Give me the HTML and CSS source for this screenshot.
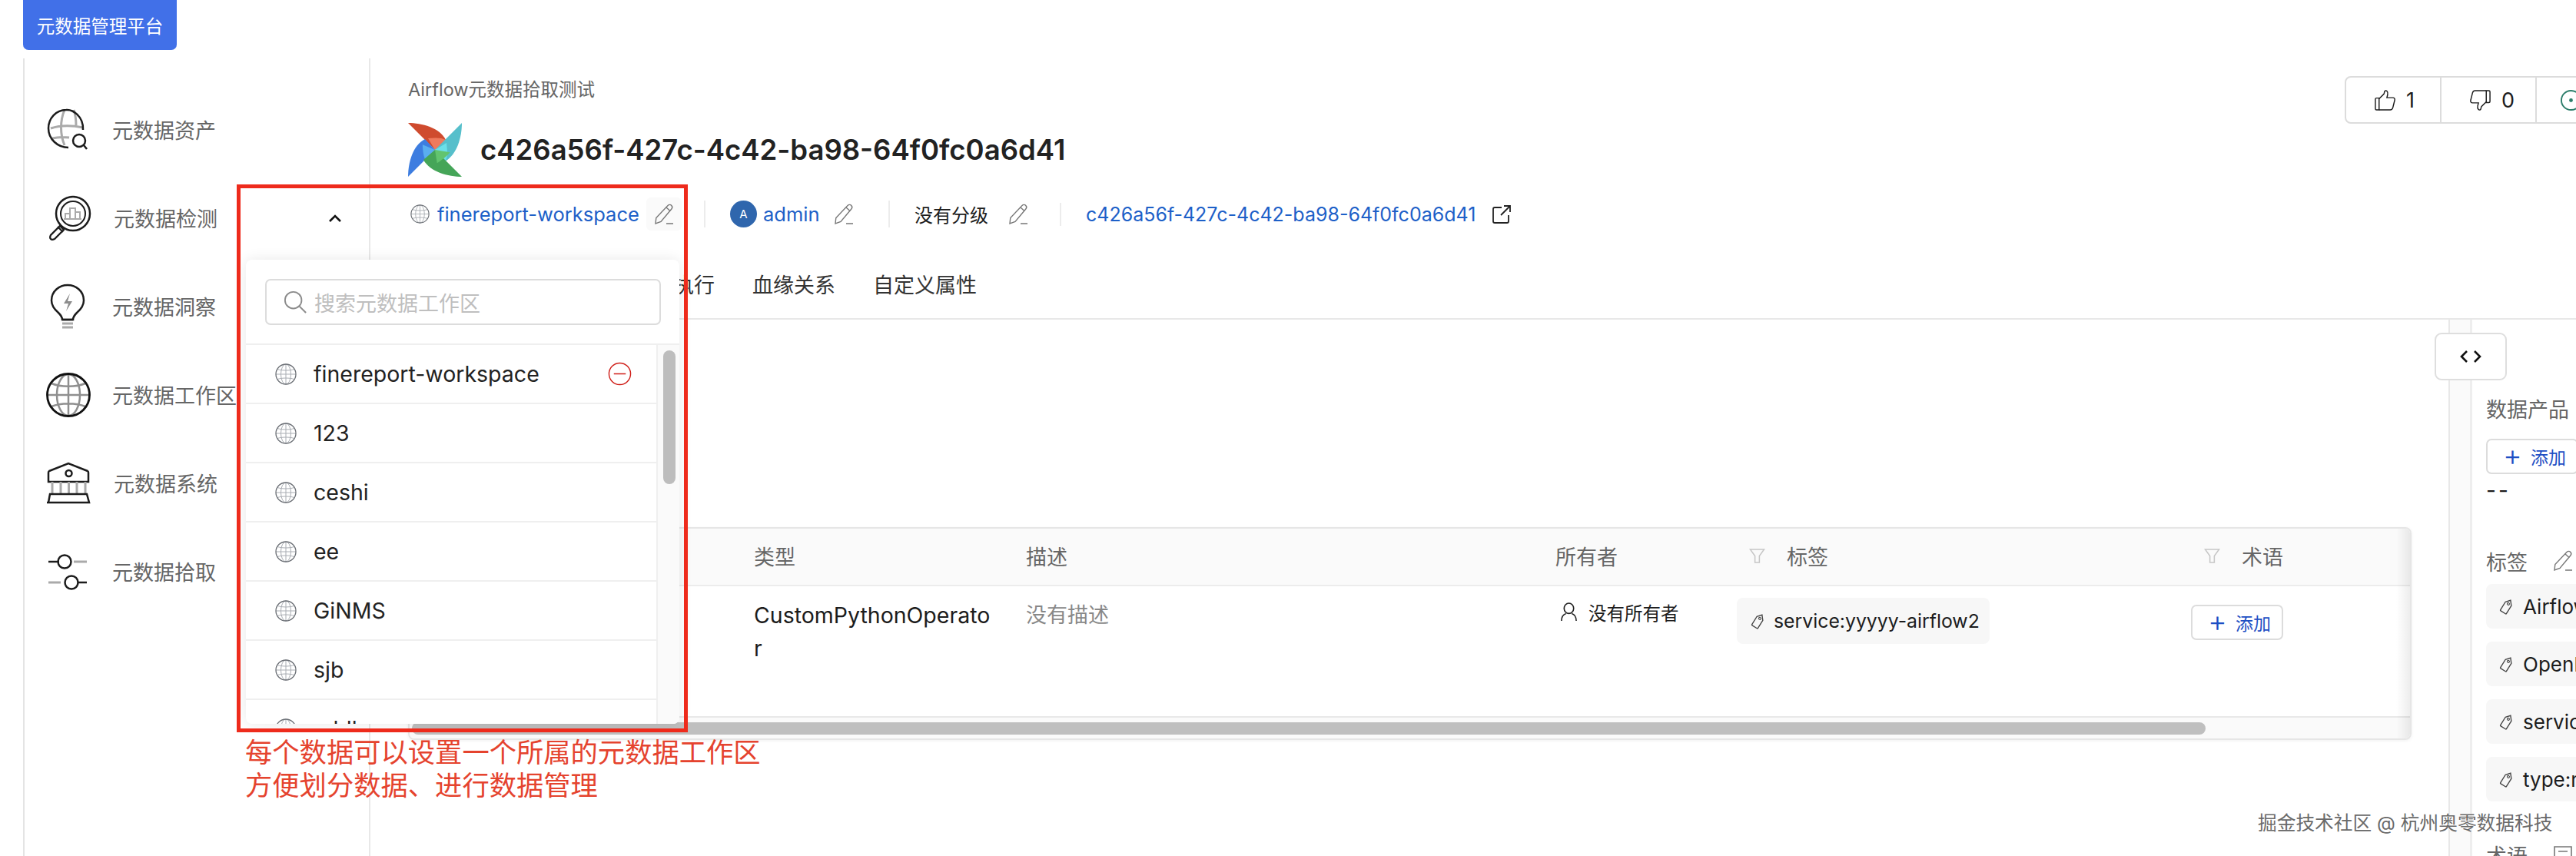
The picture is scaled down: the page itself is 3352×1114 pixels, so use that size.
FILE: index.html
```html
<!DOCTYPE html>
<html>
<head>
    <meta charset="utf-8">
    <title>元数据管理平台</title>
    <link rel="stylesheet" href="styles.css">
</head>
<body>
    <svg class="sprite" xmlns="http://www.w3.org/2000/svg">
        <symbol id="globe" viewBox="0 0 28 28">
            <g fill="none" stroke="#a9adb3" stroke-width="1">
                <ellipse cx="14" cy="14" rx="6.5" ry="13"/>
                <path d="M14 1v26M1 14h26M3 7.5c6 2 16 2 22 0M3 20.5c6-2 16-2 22 0"/>
            </g>
            <circle cx="14" cy="14" r="13" fill="none" stroke="#6b6f75" stroke-width="1.3"/>
        </symbol>
        <symbol id="pencil" viewBox="0 0 26 28">
            <path d="M18 2.5c1.500-1.500 3.500-1.500 4.800 0 1.300 1.400 1.200 3.200 0 4.500L9 23.500l-7 2.500 .8-7.500z" fill="none" stroke="currentColor" stroke-width="1.4"/>
            <path d="M16 5l5 4.500M16 26h9" fill="none" stroke="currentColor" stroke-width="1.4"/>
        </symbol>
        <symbol id="tag" viewBox="0 0 24 24">
            <g transform="rotate(32 12 12)">
                <path d="M7 8l5-6 5 6v13c0 .7-.4 1-1 1H8c-.6 0-1-.3-1-1z" fill="none" stroke="currentColor" stroke-width="1.5"/>
                <circle cx="12" cy="8" r="1.6" fill="none" stroke="currentColor" stroke-width="1.2"/>
            </g>
        </symbol>
        <symbol id="funnel" viewBox="0 0 22 22">
            <path d="M1.500 2h19l-6.500 9v9H8v-9z" fill="none" stroke="#c6c6c6" stroke-width="1.6"/>
        </symbol>
        <symbol id="thumb" viewBox="0 0 30 30">
            <path d="M2 13.500c0-1 .6-1.500 1.500-1.500H7v16H3.500C2.600 28 2 27.500 2 26.500z" fill="none" stroke="currentColor" stroke-width="1.5"/>
            <path d="M7 13l6.500-6.500c.5-1 .5-2.500 1-3.500s2-1.500 3-.5 1.500 3 1 5l-1 4h8c2 0 3 1.500 2.500 3.500L25.500 25c-.5 2-1.500 3-3.500 3H7" fill="none" stroke="currentColor" stroke-width="1.5"/>
        </symbol>
    </svg>

    <div class="top-bar">
        <span class="platform-badge">元数据管理平台</span>
    </div>

    <div class="layout">
        <nav class="sidebar">
            <a class="nav-item">
                <svg class="nav-icon" viewBox="0 0 60 60">
                    <g fill="none" stroke="#aaa" stroke-width="3">
                        <path d="M6 28c12-4 28-4 42-1M8 41c8-2 14-2 22-1M24 4c-6 14-6 32 0 46M36 4c2 6 3 12 3 20"/>
                    </g>
                    <path d="M48 30C49 12 34 3 26 4 13 4 3 15 3 28c0 14 12 25 26 25" fill="none" stroke="#1c1c1c" stroke-width="2.5"/>
                    <circle cx="43" cy="44" r="8" fill="#fff" stroke="#1c1c1c" stroke-width="2.5"/>
                    <path d="M49 50l4 5" stroke="#1c1c1c" stroke-width="2.5"/>
                </svg>
                <span class="nav-label">元数据资产</span>
            </a>
            <a class="nav-item nav-item-open">
                <svg class="nav-icon" viewBox="0 0 60 60">
                    <circle cx="35" cy="24" r="22" fill="none" stroke="#1c1c1c" stroke-width="2.5"/>
                    <circle cx="35" cy="24" r="16" fill="none" stroke="#1c1c1c" stroke-width="2"/>
                    <path d="M25 31v-7h6v7M31 31V17h7v14M38 31v-9h6v9M23 31h23" fill="none" stroke="#aaa" stroke-width="2"/>
                    <path d="M18 40l5 5-12 12c-2 1-4 1-5 0s-1-3 0-5zM15 41l7 7" fill="#fff" stroke="#1c1c1c" stroke-width="2.3"/>
                </svg>
                <span class="nav-label">元数据检测</span>
                <svg class="nav-chevron" viewBox="0 0 18 12">
                    <path d="M2 10l7-7 7 7" fill="none" stroke="#111" stroke-width="2.6"/>
                </svg>
            </a>
            <a class="nav-item">
                <svg class="nav-icon" viewBox="0 0 60 60">
                    <path d="M21 47c0-4-2-6-5-9C9 32 7 27 7 22 7 10 17 2 28 2s21 8 21 20c0 5-2 10-9 16-3 3-5 5-5 9z" fill="none" stroke="#1c1c1c" stroke-width="2.5"/>
                    <path d="M31 13l-8 13h6l-3 10 8-13h-6z" fill="#8d8d8d"/>
                    <path d="M21 47h14" stroke="#1c1c1c" stroke-width="2.5"/>
                    <path d="M21 52h14M21 57h14" stroke="#aaa" stroke-width="3"/>
                </svg>
                <span class="nav-label">元数据洞察</span>
            </a>
            <a class="nav-item">
                <svg class="nav-icon" viewBox="0 0 60 60">
                    <g fill="none" stroke="#8f8f8f" stroke-width="2.5">
                        <ellipse cx="29" cy="30" rx="15" ry="27"/>
                        <path d="M29 3v54M2 30h54M7 15c12 5 32 5 44 0M7 45c12-5 32-5 44 0"/>
                    </g>
                    <circle cx="29" cy="30" r="27.5" fill="none" stroke="#111" stroke-width="2.8"/>
                </svg>
                <span class="nav-label">元数据工作区</span>
            </a>
            <a class="nav-item nav-item-shift">
                <svg class="nav-icon" viewBox="0 0 60 60">
                    <path d="M4 14L29 4l25 10c1 .5 1 1 1 2v12H3V16c0-1 0-1.500 1-2z" fill="none" stroke="#1c1c1c" stroke-width="2.5"/>
                    <circle cx="29.5" cy="17" r="4" fill="none" stroke="#1c1c1c" stroke-width="2.5"/>
                    <path d="M8 28v16M19 28v16M29.500 28v16M40 28v16M51 28v16" stroke="#aaa" stroke-width="3"/>
                    <path d="M5 44h48l3 11H3zM1 55h56" fill="none" stroke="#1c1c1c" stroke-width="2.5"/>
                </svg>
                <span class="nav-label">元数据系统</span>
            </a>
            <a class="nav-item">
                <svg class="nav-icon" viewBox="0 0 60 60">
                    <path d="M3 17h14" stroke="#1c1c1c" stroke-width="2.5" fill="none"/>
                    <circle cx="24" cy="17" r="8.5" fill="none" stroke="#1c1c1c" stroke-width="2.5"/>
                    <path d="M36 17h17" stroke="#aaa" stroke-width="3"/>
                    <path d="M3 44h16" stroke="#aaa" stroke-width="3"/>
                    <circle cx="33" cy="44" r="8.5" fill="none" stroke="#1c1c1c" stroke-width="2.5"/>
                    <path d="M42 44h11" stroke="#1c1c1c" stroke-width="2.5"/>
                </svg>
                <span class="nav-label">元数据拾取</span>
            </a>
        </nav>

        <div class="content">
            <header class="page-head">
                <div class="vote-group">
                    <span class="vote-cell">
                        <svg class="vote-icon"><use href="#thumb"/></svg>1
                    </span>
                    <span class="vote-cell">
                        <svg class="vote-icon vote-icon-down"><use href="#thumb"/></svg>0
                    </span>
                    <span class="vote-cell">
                        <svg class="vote-icon" viewBox="0 0 30 30">
                            <circle cx="15" cy="15" r="13" fill="none" stroke="#2c7d6a" stroke-width="2"/>
                            <circle cx="15" cy="15" r="2.5" fill="#2c7d6a"/>
                        </svg>
                    </span>
                </div>
                <div class="crumb">Airflow元数据拾取测试</div>
                <div class="title-row">
                    <svg class="logo" viewBox="0 0 70 70">
                        <path d="M35 35L0 0c18 0 41 6 49 22z" fill="#cf4b2e"/>
                        <path d="M35 35l-9-15c9-1 18-1 23 2z" fill="#ef7a5d"/>
                        <path d="M35 35L70 0c0 18-6 41-22 50z" fill="#56bfcb"/>
                        <path d="M35 35l15-9c1 9 2 19-2 24z" fill="#6bdfe8"/>
                        <path d="M35 35L0 70c0-18 6-41 22-49z" fill="#3d7de0"/>
                        <path d="M35 35L20 26c-1 9-1 18 2 23z" fill="#5aaef0" transform="rotate(-8 35 35)"/>
                        <path d="M35 35l35 35c-18 0-41-6-50-22z" fill="#45a558"/>
                        <path d="M35 35l-9 15c9 1 18 1 22 0z" fill="#62c46f" transform="rotate(-40 35 35)"/>
                    </svg>
                    <h1 class="title">c426a56f-427c-4c42-ba98-64f0fc0a6d41</h1>
                </div>
                <div class="meta-row">
                    <span class="meta-item meta-workspace">
                        <svg class="meta-globe"><use href="#globe"/></svg>
                        <a class="meta-link">finereport-workspace</a>
                        <span class="pencil-box"><svg class="pencil"><use href="#pencil"/></svg></span>
                    </span>
                    <span class="meta-item meta-owner">
                        <span class="avatar">A</span>
                        <a class="meta-link">admin</a>
                        <svg class="pencil"><use href="#pencil"/></svg>
                    </span>
                    <span class="meta-item meta-tier">
                        <span class="meta-text">没有分级</span>
                        <svg class="pencil"><use href="#pencil"/></svg>
                    </span>
                    <span class="meta-item meta-source">
                        <a class="meta-link meta-link-id">c426a56f-427c-4c42-ba98-64f0fc0a6d41</a>
                        <svg class="external" viewBox="0 0 26 26">
                            <path d="M13 4H4C2.500 4 2 4.500 2 6v16c0 1.500 .5 2 2 2h16c1.500 0 2-.5 2-2v-8" fill="none" stroke="#222" stroke-width="1.8"/>
                            <path d="M12 14L24 2M16 2h8v8" fill="none" stroke="#222" stroke-width="1.8"/>
                        </svg>
                    </span>
                </div>
                <div class="tabs">
                    <span class="tab">执行</span>
                    <span class="tab">血缘关系</span>
                    <span class="tab">自定义属性</span>
                </div>
            </header>

            <div class="body-row">
                <main class="main-area">
                    <div class="table-card">
                        <div class="table-head">
                            <span class="cell"></span>
                            <span class="cell">类型</span>
                            <span class="cell">描述</span>
                            <span class="cell">所有者</span>
                            <span class="cell cell-filter"><svg class="funnel"><use href="#funnel"/></svg>标签</span>
                            <span class="cell cell-filter"><svg class="funnel"><use href="#funnel"/></svg>术语</span>
                        </div>
                        <div class="table-row">
                            <span class="cell"></span>
                            <span class="cell cell-type">CustomPythonOperato<br>r</span>
                            <span class="cell cell-muted">没有描述</span>
                            <span class="cell cell-owner">
                                <svg class="user-icon" viewBox="0 0 24 26">
                                    <ellipse cx="12" cy="8" rx="6.5" ry="7" fill="none" stroke="#222" stroke-width="1.7"/>
                                    <path d="M2 25c0-6 3-9 6-10M22 25c0-6-3-9-6-10" fill="none" stroke="#222" stroke-width="1.7"/>
                                </svg>
                                没有所有者
                            </span>
                            <span class="cell cell-tag">
                                <span class="tag-pill"><svg class="tag-icon"><use href="#tag"/></svg>service:yyyyy-airflow2</span>
                            </span>
                            <span class="cell cell-add">
                                <span class="add-btn"><span class="add-plus">+</span>添加</span>
                            </span>
                        </div>
                        <div class="table-scroll"><span class="table-thumb"></span></div>
                    </div>
                </main>

                <div class="panel-band"></div>
                <button class="panel-toggle">
                    <svg viewBox="0 0 28 18" class="toggle-icon">
                        <path d="M9 2L2 9l7 7M19 2l7 7-7 7" fill="none" stroke="#111" stroke-width="2.6"/>
                    </svg>
                </button>

                <aside class="side-panel">
                    <div class="side-title">数据产品</div>
                    <span class="add-btn side-add"><span class="add-plus">+</span>添加</span>
                    <div class="side-empty">--</div>
                    <div class="side-title side-title-tags">标签<svg class="pencil side-pencil"><use href="#pencil"/></svg></div>
                    <div class="side-tags">
                        <span class="side-tag"><svg class="tag-icon"><use href="#tag"/></svg>Airflow</span>
                        <span class="side-tag"><svg class="tag-icon"><use href="#tag"/></svg>OpenMetadata</span>
                        <span class="side-tag"><svg class="tag-icon"><use href="#tag"/></svg>service:yyyyy</span>
                        <span class="side-tag"><svg class="tag-icon"><use href="#tag"/></svg>type:note</span>
                    </div>
                    <div class="side-title side-title-terms">术语
                        <svg class="side-doc" viewBox="0 0 26 26">
                            <path d="M2 3h22v16H10l-8 5zM7 9h12" fill="none" stroke="#777" stroke-width="1.6"/>
                        </svg>
                    </div>
                </aside>
            </div>
        </div>
    </div>

    <!-- dropdown and the red note drawn on top of the page -->
    <div class="popover">
        <div class="popover-search">
            <div class="search-box">
                <svg class="search-icon" viewBox="0 0 32 32">
                    <circle cx="13.5" cy="13.5" r="11.5" fill="none" stroke="#8c8c8c" stroke-width="2"/>
                    <path d="M22 22l9 9" stroke="#8c8c8c" stroke-width="2.2"/>
                </svg>
                <span class="search-placeholder">搜索元数据工作区</span>
            </div>
        </div>
        <div class="popover-body">
            <ul class="ws-list">
                <li class="ws-row">
                    <svg class="ws-globe"><use href="#globe"/></svg>
                    <span class="ws-name">finereport-workspace</span>
                    <svg class="ws-remove" viewBox="0 0 32 32">
                        <circle cx="16" cy="16" r="14.5" fill="none" stroke="#d0201a" stroke-width="1.5"/>
                        <path d="M8 16h16" stroke="#d0201a" stroke-width="1.5"/>
                    </svg>
                </li>
                <li class="ws-row"><svg class="ws-globe"><use href="#globe"/></svg><span class="ws-name">123</span></li>
                <li class="ws-row"><svg class="ws-globe"><use href="#globe"/></svg><span class="ws-name">ceshi</span></li>
                <li class="ws-row"><svg class="ws-globe"><use href="#globe"/></svg><span class="ws-name">ee</span></li>
                <li class="ws-row"><svg class="ws-globe"><use href="#globe"/></svg><span class="ws-name">GiNMS</span></li>
                <li class="ws-row"><svg class="ws-globe"><use href="#globe"/></svg><span class="ws-name">sjb</span></li>
                <li class="ws-row"><svg class="ws-globe"><use href="#globe"/></svg><span class="ws-name">xddl</span></li>
            </ul>
            <div class="ws-track"><span class="ws-thumb"></span></div>
        </div>
    </div>
    <div class="note-frame"></div>
    <p class="note-text">每个数据可以设置一个所属的元数据工作区<br>方便划分数据、进行数据管理</p>
    <div class="watermark">掘金技术社区 @ 杭州奥零数据科技</div>
</body>
</html>
```

FILE: styles.css
```css
* {
    box-sizing: border-box;
}
html, body {
    margin: 0;
    height: 100%;
}
body {
    position: relative;
    width: 3352px;
    height: 1114px;
    overflow: hidden;
    background: #fff;
    color: #1c1c1c;
    font-family: Inter, "Noto Sans CJK SC", sans-serif;
    font-size: 24px;
}
.sprite {
    position: absolute;
    width: 0;
    height: 0;
}

/* top badge */
.top-bar {
    height: 76px;
    padding-left: 30px;
}
.platform-badge {
    display: inline-flex;
    align-items: center;
    justify-content: center;
    width: 200px;
    height: 65px;
    background: #4170e8;
    border-radius: 0 0 7px 7px;
    color: #fff;
    font-size: 23.5px;
}

.layout {
    display: flex;
    height: 1038px;
    margin-left: 30px;
}

/* left nav */
.sidebar {
    flex: 0 0 452px;
    padding-top: 35px;
    border-left: 2px solid #e4e4e4;
    border-right: 2px solid #e8e8e8;
}
.nav-item {
    display: flex;
    align-items: center;
    height: 115px;
    padding-left: 28px;
    color: #666;
    font-size: 27px;
}
.nav-icon {
    flex: none;
    width: 60px;
    height: 60px;
    margin-right: 26px;
}
.nav-item-open .nav-label,
.nav-item-shift .nav-label {
    margin-left: 2px;
}
.nav-chevron {
    width: 18px;
    height: 12px;
    margin-left: 144px;
}
.nav-label {
    white-space: nowrap;
}

.content {
    flex: 1;
    min-width: 0;
    display: flex;
    flex-direction: column;
}

/* page head */
.page-head {
    position: relative;
    flex: 0 0 340px;
    padding: 24px 0 0 49px;
    border-bottom: 2px solid #e8e8e8;
}
.vote-group {
    position: absolute;
    top: 23px;
    left: 2569px;
    display: flex;
    height: 62px;
    border: 2px solid #dcdcdc;
    border-radius: 8px;
    background: #fff;
}
.vote-cell {
    display: flex;
    align-items: center;
    gap: 13px;
    width: 124px;
    padding-left: 36px;
    border-right: 2px solid #dcdcdc;
    font-size: 27px;
}
.vote-cell:last-child {
    border-right: 0;
    padding-left: 30px;
}
.vote-icon {
    width: 29px;
    height: 29px;
}
.vote-icon-down {
    transform: rotate(180deg);
}
.crumb {
    height: 34px;
    line-height: 34px;
    color: #666;
    font-size: 23.5px;
}
.title-row {
    display: flex;
    align-items: center;
    gap: 24px;
    height: 70px;
    margin-top: 26px;
}
.logo {
    width: 70px;
    height: 70px;
}
.title {
    margin: 0;
    font-size: 36.5px;
    font-weight: 600;
    color: #222;
    white-space: nowrap;
}
.meta-row {
    display: flex;
    align-items: center;
    height: 43px;
    margin-top: 27px;
}
.meta-item {
    display: flex;
    align-items: center;
}
.meta-workspace {
    width: 385px;
    padding-left: 3px;
}
.meta-owner {
    width: 240px;
    padding-left: 32px;
    border-left: 2px solid #ececec;
}
.meta-tier {
    width: 223px;
    padding-left: 32px;
    border-left: 2px solid #ececec;
}
.meta-source {
    padding-left: 32px;
    border-left: 2px solid #ececec;
}
.meta-globe {
    width: 25px;
    height: 25px;
    margin-right: 10px;
}
.meta-link {
    color: #1d60c8;
    font-size: 25.5px;
    white-space: nowrap;
}
.meta-link-id {
    font-size: 25px;
}
.pencil-box {
    display: flex;
    align-items: center;
    justify-content: center;
    width: 46px;
    height: 43px;
    margin-left: 9px;
    background: #fafafa;
    border-radius: 6px;
}
.pencil {
    width: 26px;
    height: 28px;
    color: #777;
}
.meta-owner .pencil {
    margin-left: 18px;
}
.meta-tier .pencil {
    margin-left: 26px;
}
.avatar {
    display: flex;
    align-items: center;
    justify-content: center;
    width: 35px;
    height: 35px;
    margin-right: 8px;
    border-radius: 50%;
    background: #2f66ad;
    color: #fff;
    font-size: 15px;
}
.meta-text {
    font-size: 24px;
}
.external {
    width: 26px;
    height: 26px;
    margin-left: 21px;
}
.tabs {
    display: flex;
    align-items: center;
    gap: 49px;
    height: 89px;
    margin: 25px 0 0 345px;
    font-size: 27px;
    color: #333;
}

/* table area */
.body-row {
    position: relative;
    flex: 1;
    display: flex;
    min-height: 0;
}
.main-area {
    flex: 0 0 2704px;
    padding: 270px 48px 0 49px;
}
.table-card {
    position: relative;
    height: 277px;
    border: 2px solid #e6e6e6;
    border-radius: 8px;
    overflow: hidden;
    box-shadow: 0 1px 4px rgba(0, 0, 0, .06);
}
.table-card::after {
    content: "";
    position: absolute;
    top: 0;
    right: 0;
    bottom: 0;
    width: 18px;
    background: linear-gradient(to right, rgba(0, 0, 0, 0), rgba(0, 0, 0, .07));
}
.table-head,
.table-row {
    display: grid;
    grid-template-columns: 448px 354px 689px 235px 592px 1fr;
}
.table-head {
    height: 75px;
    padding-bottom: 3px;
    align-items: center;
    background: #fafafa;
    border-bottom: 2px solid #ececec;
    color: #666;
    font-size: 27px;
}
.table-row {
    height: 171px;
    border-bottom: 2px solid #e8e8e8;
    font-size: 28.5px;
}
.cell {
    min-width: 0;
}
.cell-filter {
    display: flex;
    align-items: center;
    gap: 28px;
    padding-left: 17px;
}
.funnel {
    width: 21px;
    height: 21px;
}
.cell-type {
    padding-top: 16px;
    line-height: 43px;
    color: #1c1c1c;
    white-space: nowrap;
}
.cell-muted {
    padding-top: 16px;
    line-height: 43px;
    color: #888;
    font-size: 27px;
}
.cell-owner {
    display: flex;
    align-items: center;
    align-self: start;
    gap: 14px;
    height: 43px;
    margin-top: 12px;
    padding-left: 6px;
    font-size: 23.5px;
}
.user-icon {
    width: 23px;
    height: 25px;
}
.cell-tag {
    padding-top: 15px;
}
.tag-pill {
    display: inline-flex;
    align-items: center;
    gap: 9px;
    width: 329px;
    height: 60px;
    padding-left: 17px;
    margin-left: 1px;
    background: #f7f7f7;
    border-radius: 8px;
    font-size: 24.8px;
    white-space: nowrap;
}
.tag-icon {
    flex: none;
    width: 22px;
    height: 22px;
    color: #444;
}
.cell-add {
    padding-top: 24px;
}
.add-btn {
    display: inline-flex;
    align-items: center;
    width: 120px;
    height: 46px;
    padding-left: 20px;
    background: #fff;
    border: 2px solid #dcdcdc;
    border-radius: 7px;
    color: #1d4fc4;
    font-size: 23px;
}
.add-plus {
    width: 36px;
    font-size: 38px;
    font-weight: 300;
    line-height: 38px;
    margin-top: -4px;
}
.table-scroll {
    height: 27px;
    padding: 6px 0 0 3px;
    background: #fafafa;
}
.table-thumb {
    display: block;
    width: 2334px;
    height: 16px;
    background: #bfbfbf;
    border-radius: 8px;
}

/* right panel */
.panel-band {
    flex: 0 0 31px;
    background: #fafafa;
    border-left: 2px solid #e8e8e8;
    border-right: 3px solid #eee;
}
.panel-toggle {
    position: absolute;
    top: 17px;
    left: 2686px;
    display: flex;
    align-items: center;
    justify-content: center;
    width: 94px;
    height: 62px;
    padding: 0;
    background: #fff;
    border: 2px solid #dedede;
    border-radius: 9px;
}
.toggle-icon {
    width: 28px;
    height: 18px;
}
.side-panel {
    flex: 1;
    min-width: 0;
    display: flex;
    flex-direction: column;
    align-items: flex-start;
    padding: 98px 0 0 18px;
    overflow: hidden;
}
.side-title {
    flex: none;
    display: flex;
    align-items: center;
    height: 34px;
    color: #666;
    font-size: 27px;
    white-space: nowrap;
}
.side-add {
    flex: none;
    margin-top: 23px;
}
.side-empty {
    flex: none;
    height: 30px;
    margin-top: 6px;
    line-height: 30px;
    font-size: 28px;
    letter-spacing: 3px;
}
.side-title-tags {
    margin-top: 60px;
}
.side-pencil {
    margin-left: 33px;
}
.side-tags {
    flex: none;
    display: flex;
    flex-direction: column;
    gap: 17px;
    margin-top: 13px;
}
.side-tag {
    display: flex;
    align-items: center;
    gap: 10px;
    width: 300px;
    height: 58px;
    padding-left: 16px;
    background: #f7f7f7;
    border-radius: 8px;
    font-size: 26px;
    white-space: nowrap;
}
.side-title-terms {
    margin-top: 52px;
}
.side-doc {
    width: 26px;
    height: 26px;
    margin-left: 33px;
}

/* dropdown over the page */
.popover {
    position: absolute;
    top: 338px;
    left: 320px;
    width: 564px;
    height: 604px;
    background: #fff;
    border-radius: 8px;
    box-shadow: 0 0 18px rgba(0, 0, 0, .09);
    overflow: hidden;
}
.popover-search {
    height: 111px;
    padding: 25px 24px 0 25px;
    border-bottom: 2px solid #efefef;
}
.search-box {
    display: flex;
    align-items: center;
    height: 60px;
    padding-left: 22px;
    border: 2px solid #dcdcdc;
    border-radius: 7px;
}
.search-icon {
    width: 30px;
    height: 30px;
    margin-right: 10px;
}
.search-placeholder {
    color: #bfbfbf;
    font-size: 27px;
}
.popover-body {
    display: flex;
}
.ws-list {
    flex: 0 0 536px;
    margin: 0;
    padding: 0;
    list-style: none;
    border-right: 2px solid #efefef;
}
.ws-row {
    display: flex;
    align-items: center;
    height: 77px;
    padding-left: 38px;
    border-bottom: 2px solid #efefef;
    font-size: 28.5px;
    color: #222;
}
.ws-globe {
    width: 28px;
    height: 28px;
    margin-right: 22px;
}
.ws-name {
    flex: 1;
}
.ws-remove {
    width: 31px;
    height: 31px;
    margin-right: 32px;
}
.ws-track {
    flex: 1;
    padding: 7px 5px 0 7px;
    background: #fafafa;
}
.ws-thumb {
    display: block;
    height: 174px;
    background: #bdbdbd;
    border-radius: 8px;
}

/* red note */
.note-frame {
    position: absolute;
    top: 240px;
    left: 308px;
    width: 587px;
    height: 713px;
    border: 5px solid #ee2b1c;
}
.note-text {
    position: absolute;
    top: 958px;
    left: 319px;
    margin: 0;
    color: #e5432e;
    font-size: 35.3px;
    line-height: 43px;
    white-space: nowrap;
}
.watermark {
    position: absolute;
    top: 1056px;
    left: 2938px;
    color: #6a6a6a;
    font-size: 24.7px;
    line-height: 30px;
    white-space: nowrap;
    text-shadow: 0 0 2px #fff;
}
```
